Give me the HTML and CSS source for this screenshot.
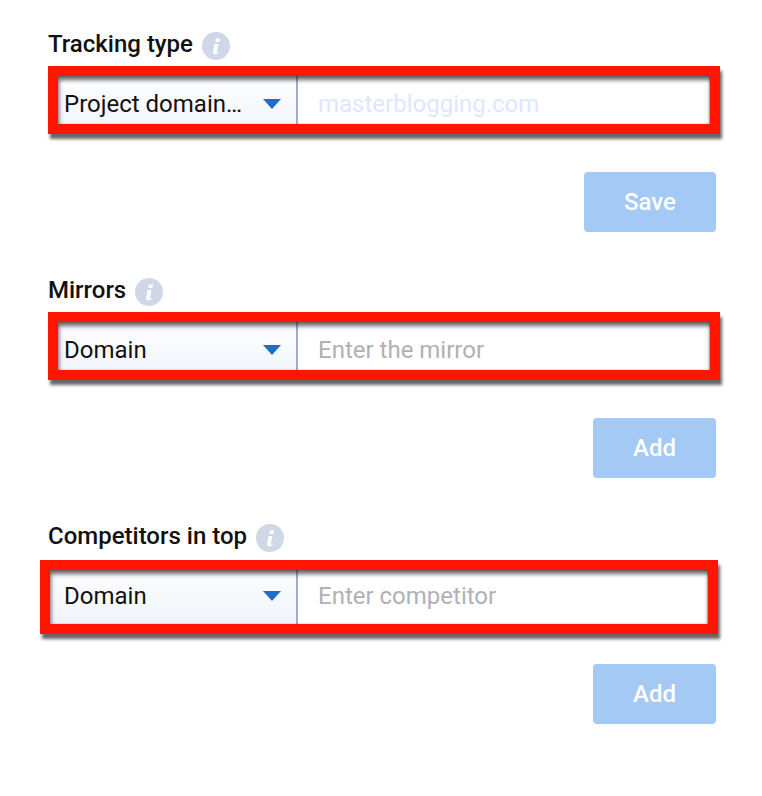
FILE: index.html
```html
<!DOCTYPE html>
<html>
<head>
  <meta charset="utf-8">
  <meta name="viewport" content="width=device-width, initial-scale=1">
  <title>Project settings</title>
  <link rel="stylesheet" href="styles.css">
</head>
<body>
  <section class="block">
    <div class="block-title">
      <span>Tracking type</span>
      <svg class="info" viewBox="0 0 28 28"><circle cx="14" cy="14" r="14" fill="#cfd8e6"/><path d="M14 6.500h4l-.7 3.600h-4zM12.400 12h4.200l-1.800 8c-.1.600.3.800 1.600.2l.3 1c-1.600 1.200-5.700 2-5.600-.9z" fill="#fff"/></svg>
    </div>
    <div class="field">
      <div class="picker"><span class="picker-text">Project domain…</span><i class="caret"></i></div>
      <div class="entry entry-filled">masterblogging.com</div>
      <div class="mark"></div>
    </div>
    <div class="actions"><button class="btn btn-save">Save</button></div>
  </section>

  <section class="block">
    <div class="block-title">
      <span>Mirrors</span>
      <svg class="info" viewBox="0 0 28 28"><circle cx="14" cy="14" r="14" fill="#cfd8e6"/><path d="M14 6.500h4l-.7 3.600h-4zM12.400 12h4.200l-1.800 8c-.1.600.3.800 1.600.2l.3 1c-1.600 1.200-5.700 2-5.600-.9z" fill="#fff"/></svg>
    </div>
    <div class="field">
      <div class="picker"><span class="picker-text">Domain</span><i class="caret"></i></div>
      <div class="entry">Enter the mirror</div>
      <div class="mark"></div>
    </div>
    <div class="actions"><button class="btn">Add</button></div>
  </section>

  <section class="block">
    <div class="block-title">
      <span>Competitors in top</span>
      <svg class="info" viewBox="0 0 28 28"><circle cx="14" cy="14" r="14" fill="#cfd8e6"/><path d="M14 6.500h4l-.7 3.600h-4zM12.400 12h4.200l-1.800 8c-.1.600.3.800 1.600.2l.3 1c-1.600 1.200-5.700 2-5.600-.9z" fill="#fff"/></svg>
    </div>
    <div class="field">
      <div class="picker"><span class="picker-text">Domain</span><i class="caret"></i></div>
      <div class="entry">Enter competitor</div>
      <div class="mark mark-wide"></div>
    </div>
    <div class="actions"><button class="btn">Add</button></div>
  </section>
</body>
</html>
```

FILE: styles.css
```css
body {
  margin: 0;
  padding: 29px 46px 0 48px;
  background: #fff;
  color: #111;
  font-family: Roboto, sans-serif;
}

.block {
  height: 246px;
}

.block-title {
  display: flex;
  align-items: center;
  gap: 9px;
  height: 30px;
  font-size: 24px;
  font-weight: 500;
}

.info {
  width: 28px;
  height: 28px;
  margin-top: 4px;
}

.field {
  position: relative;
  display: flex;
  height: 60px;
  margin-top: 13px;
}

.picker {
  display: flex;
  align-items: center;
  justify-content: space-between;
  box-sizing: border-box;
  width: 250px;
  padding: 4px 16px 0;
  background: linear-gradient(180deg, #fff, #f0f4fb);
  border-right: 2px solid #a5aac4;
  font-size: 24px;
}

.caret {
  width: 0;
  height: 0;
  margin-right: -1px;
  border-left: 9px solid transparent;
  border-right: 9px solid transparent;
  border-top: 10px solid #1f6fc4;
}

.entry {
  flex: 1;
  padding: 2px 20px 0;
  line-height: 60px;
  font-size: 24px;
  color: #aeb1b7;
}

.entry-filled {
  color: #dfe6ff;
}

/* red annotation over the field */
.mark {
  position: absolute;
  top: -6px;
  left: 0;
  right: -4px;
  bottom: -2px;
  border: 10px solid #ff1500;
  box-shadow: 2px 5px 3px rgba(0, 0, 0, 0.6), inset 1px 4px 4px rgba(0, 0, 0, 0.6), inset -1px 0 2px rgba(0, 0, 0, 0.3);
}

.mark-wide {
  top: -4px;
  left: -8px;
  right: -2px;
  bottom: -10px;
}

.actions {
  display: flex;
  justify-content: flex-end;
  margin-top: 40px;
}

.btn {
  width: 123px;
  height: 60px;
  border: none;
  border-radius: 4px;
  background: #a4c9f4;
  color: #fff;
  font-family: Roboto, sans-serif;
  font-size: 24px;
  font-weight: 500;
}

.btn-save {
  width: 132px;
}
```
